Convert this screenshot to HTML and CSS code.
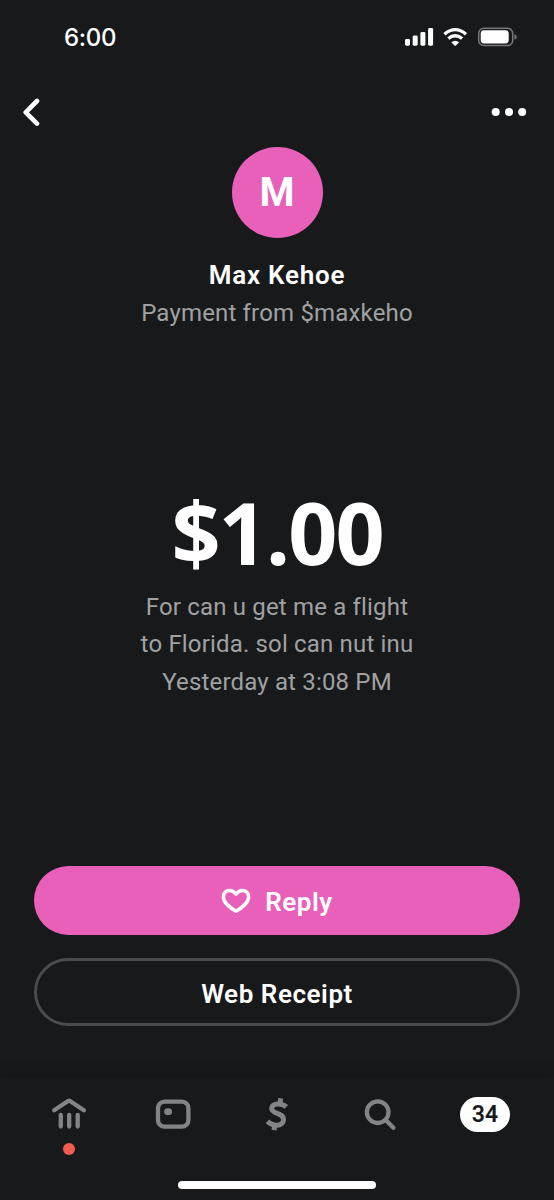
FILE: index.html
```html
<!DOCTYPE html>
<html lang="en">
<head>
<meta charset="utf-8">
<title>Payment</title>
<link rel="stylesheet" href="styles.css">
</head>
<body>
<div class="screen">
  <header class="status">
    <span class="time">6:00</span>
    <svg class="status-icons" width="114" height="22" viewBox="404 26 114 22" fill="#fff">
      <rect x="405" y="39" width="5" height="6.7" rx="1.4"/>
      <rect x="412.7" y="35.6" width="5" height="10.1" rx="1.4"/>
      <rect x="420.4" y="32" width="5" height="13.7" rx="1.4"/>
      <rect x="428.1" y="28" width="5" height="17.7" rx="1.4"/>
      <g fill="none" stroke="#fff" stroke-width="3.3">
        <path d="M444.4 34.2Q455.2 25 466 34.2"/>
        <path d="M448.3 38.6Q455.2 32.8 462.1 38.6"/>
      </g>
      <path d="M451.3 42.3Q455.2 39 459.1 42.3L455.9 45.4Q455.2 46 454.5 45.4Z"/>
      <rect x="478.7" y="28.2" width="34" height="17.4" rx="5.2" fill="none" stroke="#77787a" stroke-width="1.5"/>
      <rect x="480.7" y="30.2" width="28" height="13.3" rx="3.4"/>
      <path d="M514.5 34.2Q516.8 35 516.8 37T514.5 39.8Z" fill="#77787a"/>
    </svg>
  </header>
  <nav class="topbar">
    <svg width="18" height="30" viewBox="22 97 18 30" fill="none" stroke="#fff" stroke-width="4.6" stroke-linecap="round" stroke-linejoin="round"><path d="M37 101 25.7 112.3 37 123.6"/></svg>
    <svg width="36" height="10" viewBox="490.500 107.300 36 10" fill="#fff"><circle cx="495.200" cy="112.300" r="4"/><circle cx="508.500" cy="112.300" r="4"/><circle cx="521.700" cy="112.300" r="4"/></svg>
  </nav>
  <section class="person">
    <div class="avatar"><span>M</span></div>
    <h1 class="name"><span>Max Kehoe</span></h1>
    <p class="muted source"><span>Payment from $maxkeho</span></p>
  </section>
  <section class="payment">
    <p class="amount"><span>$1.00</span></p>
    <p class="muted"><span>For can u get me a flight</span></p>
    <p class="muted"><span>to Florida. sol can nut inu</span></p>
    <p class="muted"><span>Yesterday at 3:08 PM</span></p>
  </section>
  <section class="actions">
    <button class="button reply">
      <svg width="30" height="26" viewBox="0 0 30 26" fill="none" stroke="#fff" stroke-width="3.5" stroke-linejoin="round"><path d="M15 6.200C12.500 3 10.800 2.500 8.500 2.500C5 2.500 2.400 5.200 2.400 9C2.400 15.300 9.500 19.700 15 23.300C20.500 19.700 27.600 15.300 27.600 9C27.600 5.200 25 2.500 21.500 2.500C19.200 2.500 17.500 3 15 6.200Z"/></svg>
      <span>Reply</span>
    </button>
    <button class="button receipt"><span>Web Receipt</span></button>
  </section>
  <footer class="tabs">
    <div class="tab home">
      <svg width="36" height="32" viewBox="51 1097.500 36 32" fill="none" stroke="#838486" stroke-width="4.3" stroke-linecap="round" stroke-linejoin="round"><path d="M54.200 1110.800 67.700 1101.700Q69 1100.900 70.300 1101.700L83.900 1110.800M60.800 1115.400V1127M69.200 1115.400V1127M77.700 1115.400V1127"/></svg>
      <i class="dot"></i>
    </div>
    <div class="tab"><svg width="36" height="32" viewBox="155.200 1097.300 36 32"><rect x="158.200" y="1102" width="30.400" height="25" rx="6.500" fill="none" stroke="#838486" stroke-width="4.300"/><ellipse cx="168.300" cy="1112" rx="4" ry="3.400" fill="#838486"/></svg></div>
    <div class="tab"><svg width="36" height="34" viewBox="259 1097.500 36 34" fill="none" stroke="#838486"><path stroke-width="5" d="M286.300 1107.400C282.500 1103.800 272.300 1102.500 271.700 1108.700C271.200 1115.200 283.800 1112.500 283.500 1120.300C283.200 1127.600 272.300 1127 267.500 1121.800"/><path stroke-width="5" d="M280.700 1098.900 279.900 1104M274.800 1125.500 274 1130.600"/></svg></div>
    <div class="tab"><svg width="36" height="34" viewBox="362.800 1097.300 36 34" fill="none" stroke="#838486" stroke-width="4.300" stroke-linecap="round"><circle cx="377.500" cy="1112.500" r="10.800"/><path d="M385.800 1120.500 393.200 1128"/></svg></div>
    <div class="tab"><span class="badge">34</span></div>
    <i class="home-indicator"></i>
  </footer>
</div>
</body>
</html>
```
FILE: styles.css
```css
* { box-sizing: border-box; }
body { margin: 0; background: #18191b; color: #fff; font-family: Roboto, sans-serif; }
h1, p { margin: 0; }
.screen { width: 554px; height: 1200px; display: flex; flex-direction: column; overflow: hidden; }
.status { height: 74px; padding: 0 36px 0 64px; display: flex; align-items: center; justify-content: space-between; }
.time { padding-top: 2px; font: 500 24px/30px Inter, sans-serif; letter-spacing: -0.3px; }
.topbar { height: 73px; padding: 23px 27.500px 20px 22px; display: flex; justify-content: space-between; align-items: center; }
.person { height: 340px; display: flex; flex-direction: column; align-items: center; }
.avatar { width: 91px; height: 91px; border-radius: 50%; background: #e960ba; display: flex; align-items: center; justify-content: center; font-size: 40px; font-weight: 700; line-height: 48px; }
.name { margin-top: 19px; font-size: 26px; font-weight: 600; line-height: 36px; letter-spacing: 0.75px; white-space: nowrap; }
.muted { height: 37.300px; line-height: 37px; font-size: 24px; font-weight: 400; color: #a0a1a2; letter-spacing: 0.17px; white-space: nowrap; }
.source { margin-top: 2px; }
.payment { height: 379px; display: flex; flex-direction: column; align-items: center; }
.amount { height: 102px; font: 700 86px/90px "Open Sans", sans-serif; letter-spacing: -2px; }
.actions { height: 211px; padding: 0 34px; display: flex; flex-direction: column; gap: 23px; }
.button { width: 100%; height: 69px; flex: none; padding: 0; border: 0; border-radius: 35px; display: flex; align-items: center; justify-content: center; gap: 14px; background: transparent; color: #fff; font: 600 26px/36px Roboto, sans-serif; letter-spacing: 0.55px; }
.button span { padding-top: 3px; }
.reply { background: #e960ba; }
.receipt { height: 68px; border: 3px solid #4a4b4c; }
.tabs { position: relative; height: 123px; padding: 20px 17px 0; display: grid; grid-template-columns: repeat(5, 104px); align-items: start; background: #18191b; box-shadow: 0 -1px 10px #141517; }
.tab { display: flex; flex-direction: column; align-items: center; }
.dot { width: 12px; height: 12px; margin-top: 14px; border-radius: 50%; background: #f25b52; }
.badge { width: 50px; height: 35px; border-radius: 18px; background: #fff; color: #18191b; display: flex; align-items: center; justify-content: center; font-size: 23px; font-weight: 600; line-height: 30px; }
.home-indicator { position: absolute; left: 178px; bottom: 11px; width: 198px; height: 8px; border-radius: 4px; background: #fff; }
```
